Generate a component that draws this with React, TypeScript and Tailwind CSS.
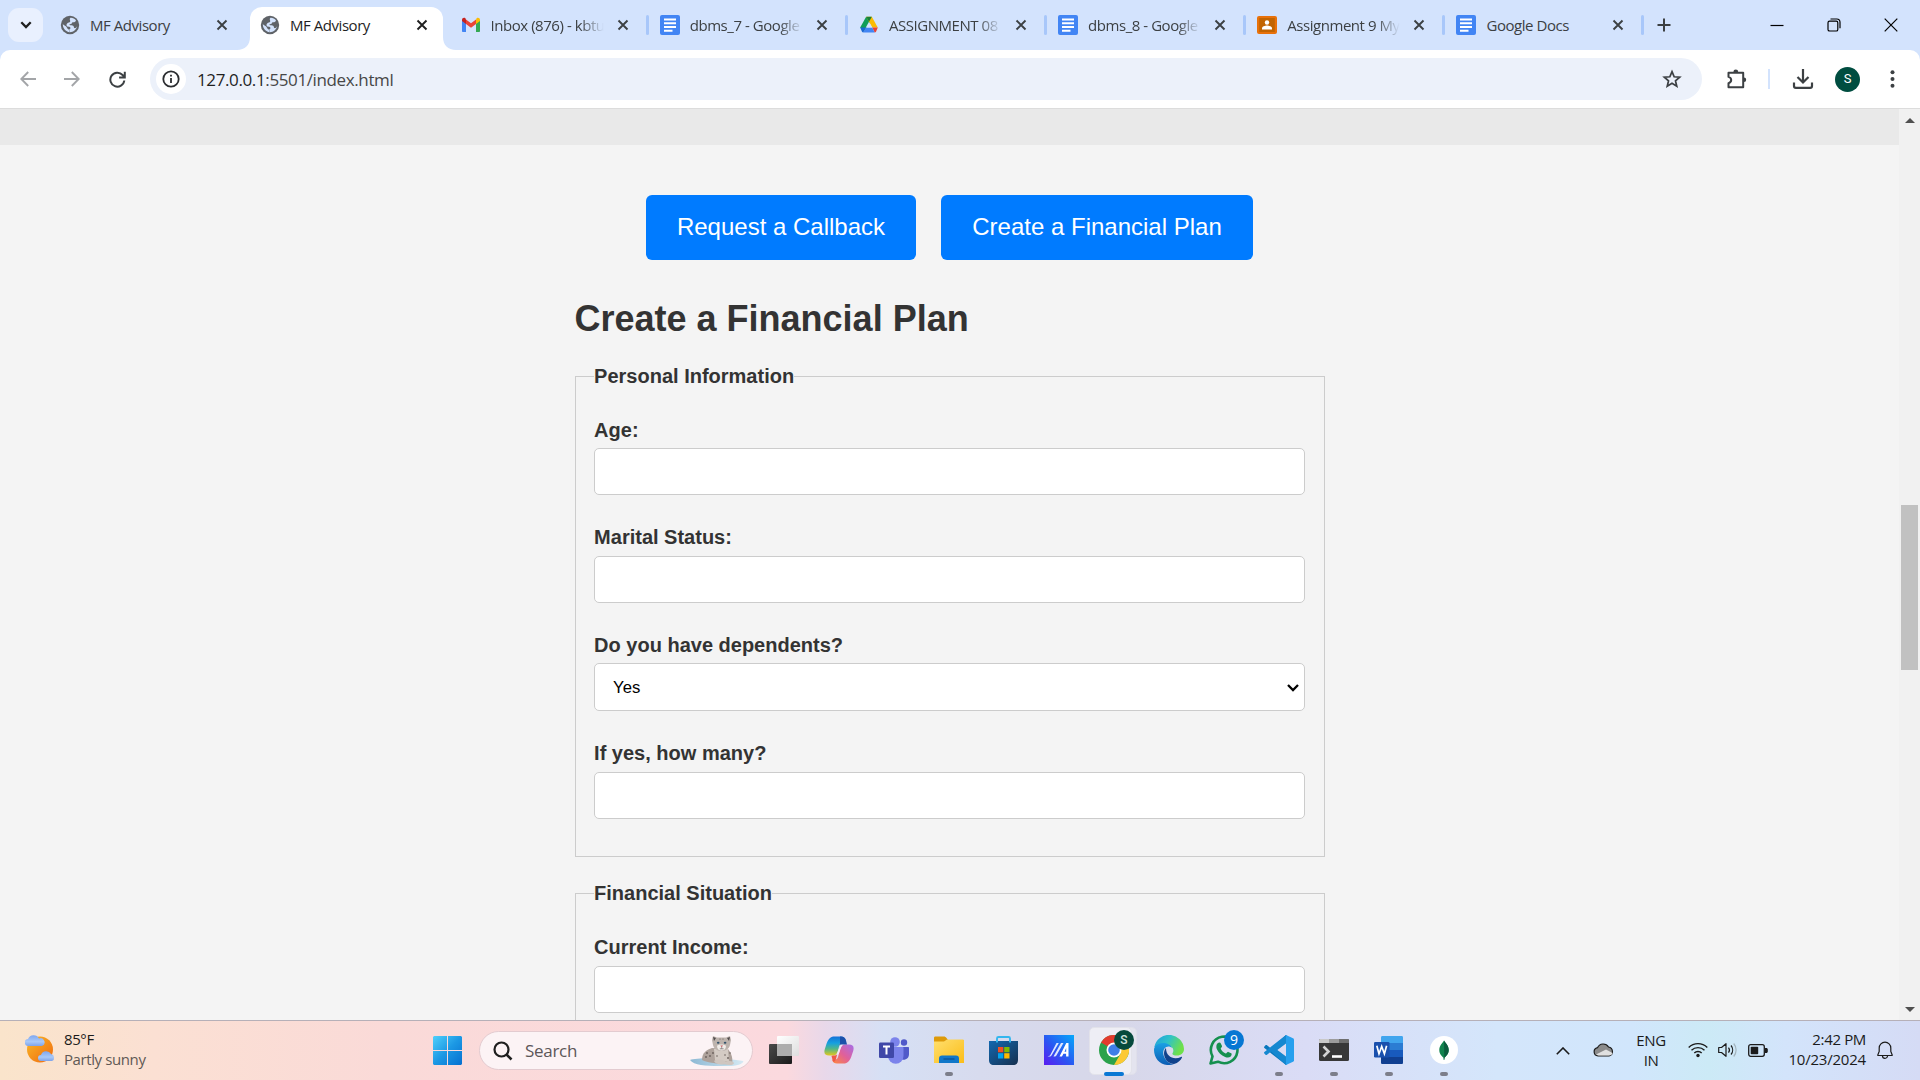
import React from "react";

const UI = "font-['Open_Sans','Noto_Sans',sans-serif]";

function Globe() {
  return (
    <svg width="22" height="22" viewBox="0 0 24 24" className="-m-px">
      <circle cx="12" cy="12" r="10" fill="#5f6368" />
      <path
        d="M12.500 4.200c2.300-.2 4.700 1 6 2.600-.3 1.900-1.800 2.400-3.700 2.200-1 .9-.6 1.800-2 2-1 .2-1.600.3-1.300.9.500.8 3.300-.2 4.300 1.200.7 1 .3 2 1 2.300 1 .3 2.200-.4 3-2-.8 3.500-4 6.500-8 6.500.2-1.600-.2-2.400-1.300-2.900C8.500 16 8.800 14 7.500 13.300c-1.200-.6-2.500-.8-3.300-2.300-.3 4.500 3 8.600 7.600 8.900-.6-.5-.3-1.700-.8-2.700 1-.8 2-1.500 1.200-2.700-1-1-3.700-.2-4-2.200-.2-1.700 1.200-2.600 2.700-3 1.200-.4 1.500-1 1.300-2-.1-.9-1.200-1.300.3-3.100z"
        fill="#d3e3fd"
      />
    </svg>
  );
}

function Gmail() {
  return (
    <svg width="20" height="20" viewBox="0 0 20 20">
      <path d="M1 5v11.2c0 .5.3.8.8.8H5V8z" fill="#4285f4" />
      <path d="M19 5v11.2c0 .5-.3.8-.8.8H15V8z" fill="#34a853" />
      <path d="M15 4.500V9l4-3V4.800C19 3 17 2.200 15.600 3.300z" fill="#fbbc04" />
      <path d="M5 9V4.500L10 8.300l5-3.800V9l-5 3.800z" fill="#ea4335" />
      <path d="M1 4.800V6l4 3V4.500L4.400 3.300C3 2.200 1 3 1 4.800z" fill="#c5221f" />
    </svg>
  );
}

function Docs() {
  return (
    <svg width="20" height="20" viewBox="0 0 20 20">
      <rect width="20" height="20" rx="2" fill="#4285f4" />
      <path d="M4 4.500h12M4 8.300h12M4 12.100h12M4 15.800h8.500" stroke="#fff" strokeWidth="2" />
    </svg>
  );
}

function Drive() {
  return (
    <svg width="20" height="20" viewBox="0 0 20 20">
      <path d="M7 2h3l2.200 4.300L4.800 16.500 1.200 12.500z" fill="#0f9d58" />
      <path d="M7.200 1.800h5.600l6 10.700h-5.600z" fill="#fbbc04" />
      <path d="M7.200 1.800h5.600L10 6.700z" fill="#188038" />
      <path d="M1.200 12.500h5.600L4.300 17.500c-.6 0-1-.3-1.300-.8z" fill="#1967d2" />
      <path d="M13.200 12.500h5.600L17 16.700c-.3.500-.8.8-1.300.8z" fill="#ea4335" />
      <path d="M6.800 12.500h6.400l2.500 5H4.300z" fill="#4285f4" />
      <path d="M10 6.700l3.200 5.800H6.800z" fill="#d3e3fd" />
    </svg>
  );
}

function Classroom() {
  return (
    <svg width="20" height="18" viewBox="0 0 20 18">
      <rect width="20" height="18" rx="2" fill="#e8710a" />
      <rect x="2.200" y="2" width="15.600" height="14" fill="#c26401" />
      <circle cx="10" cy="6.500" r="2.200" fill="#fff" />
      <path d="M5 13.500v-1.200c0-1.900 3-2.800 5-2.800s5 .9 5 2.800v1.200z" fill="#fff" />
    </svg>
  );
}

function Cross({ c = "#3c4043" }: { c?: string }) {
  return (
    <svg width="12" height="12" viewBox="0 0 12 12" stroke={c} strokeWidth="1.900">
      <path d="M1.500 1.500l9 9M10.500 1.500l-9 9" />
    </svg>
  );
}

function Tab({ icon, title, fade, sep }: { icon: React.ReactNode; title: string; fade?: boolean; sep?: boolean }) {
  return (
    <div className="flex h-[50px] w-[199.200px] shrink-0 items-center">
      <div className="flex w-[20px] shrink-0 justify-center">{icon}</div>
      <div
        className={
          "ml-[10px] w-[114px] shrink-0 whitespace-nowrap text-[15px] leading-[20px] tracking-[-0.450px] text-[#3c4043] " +
          (fade ? "[mask-image:linear-gradient(to_right,#000_78%,transparent_99%)]" : "")
        }
      >
        {title}
      </div>
      <div className="ml-[12px]">
        <Cross />
      </div>
      {sep && <div className="ml-[17px] h-[20px] w-[3px] shrink-0 rounded-full bg-[#a8c7fa]" />}
    </div>
  );
}

function TabStrip() {
  return (
    <div className="flex h-[50px] bg-[#d3e3fd]">
      <div className="ml-[8px] mt-[8px] flex h-[34px] w-[35px] shrink-0 items-center justify-center rounded-[11px] bg-[#e9f0fe]">
        <svg width="12" height="8" viewBox="0 0 12 8" fill="none" stroke="#1f1f1f" strokeWidth="2.300">
          <path d="M1.300 1.300L6 6l4.700-4.700" />
        </svg>
      </div>
      <div className="ml-[17px] flex">
        <Tab icon={<Globe />} title="MF Advisory" />
        <div className="relative -ml-[9.200px] mt-[7px] flex h-[43px] w-[193px] shrink-0 items-center rounded-t-[12px] bg-white pb-[7px]">
          <svg className="absolute -left-[13px] bottom-0" width="13" height="13" viewBox="0 0 13 13">
            <path d="M13 0v13H0C8 13 13 8 13 0z" fill="#fff" />
          </svg>
          <svg className="absolute -right-[13px] bottom-0" width="13" height="13" viewBox="0 0 13 13">
            <path d="M0 0v13h13C5 13 0 8 0 0z" fill="#fff" />
          </svg>
          <div className="ml-[10px] flex w-[20px] shrink-0 justify-center">
            <Globe />
          </div>
          <div className="ml-[10px] w-[114px] text-[15px] leading-[20px] tracking-[-0.450px] text-[#1f1f1f]">MF Advisory</div>
          <div className="ml-[12px]">
            <Cross c="#1f1f1f" />
          </div>
        </div>
      </div>
      <div className="ml-[17.500px] flex">
        <Tab icon={<Gmail />} title="Inbox (876) - kbtu" fade sep />
        <Tab icon={<Docs />} title="dbms_7 - Google" fade sep />
        <Tab icon={<Drive />} title="ASSIGNMENT 08" fade sep />
        <Tab icon={<Docs />} title="dbms_8 - Google" fade sep />
        <Tab icon={<Classroom />} title="Assignment 9 My" fade sep />
        <Tab icon={<Docs />} title="Google Docs" sep />
      </div>
      <svg className="ml-[1px] mt-[18px] shrink-0" width="14" height="14" viewBox="0 0 14 14" stroke="#3c4043" strokeWidth="2">
        <path d="M7 .5v13M.5 7h13" />
      </svg>
      <div className="ml-auto mr-[22px] mt-[17px] flex h-[15px] items-center gap-[43px]">
        <svg width="14" height="14" viewBox="0 0 14 14" stroke="#000" strokeWidth="1.200">
          <path d="M.5 7.500h13" />
        </svg>
        <svg width="14" height="14" viewBox="0 0 14 14" fill="none" stroke="#000" strokeWidth="1.200">
          <rect x="1" y="3.200" width="9.800" height="9.800" rx="1.600" />
          <path d="M3.500 1h6.300c1.700 0 3.200 1.400 3.200 3.200v6" />
        </svg>
        <svg width="14" height="14" viewBox="0 0 14 14" stroke="#000" strokeWidth="1.200">
          <path d="M.7.700l12.600 12.600M13.300.7L.7 13.300" />
        </svg>
      </div>
    </div>
  );
}

function Toolbar() {
  return (
    <div className="bg-[#d3e3fd]">
      <div className="flex h-[59px] items-center rounded-t-[10px] border-b border-[#dcdcdc] bg-white">
        <svg className="ml-[20px]" width="16" height="16" viewBox="0 0 16 16" fill="none" stroke="#a3a5a8" strokeWidth="1.900">
          <path d="M16 8H1.500M8.200 1L1.300 8l6.900 7" />
        </svg>
        <svg className="ml-[28px]" width="16" height="16" viewBox="0 0 16 16" fill="none" stroke="#a3a5a8" strokeWidth="1.900">
          <path d="M0 8h14.500M7.800 1l6.900 7-6.900 7" />
        </svg>
        <svg className="ml-[29px]" width="17" height="17" viewBox="0 0 17 17" fill="none" stroke="#3c4043" strokeWidth="2">
          <path d="M15.300 9.500A7 7 0 1 1 13.600 4L15.500 6M15.800.8v5.700h-5.700" />
        </svg>
        <div className="ml-[24px] flex h-[42px] w-[1552px] items-center rounded-full bg-[#ecf1fa]">
          <div className="ml-[6px] flex size-[30px] items-center justify-center rounded-full bg-white">
            <svg width="18" height="18" viewBox="0 0 18 18" fill="none" stroke="#2b2d30" strokeWidth="1.800">
              <circle cx="9" cy="9" r="7.700" />
              <path d="M9 8v5M9 4.800v1.800" />
            </svg>
          </div>
          <div className="ml-[11px] pt-px text-[17px] leading-[24px] tracking-[-0.380px] text-[#1f1f1f]">
            127.0.0.1<span className="text-[#474747]">:5501/index.html</span>
          </div>
          <svg className="ml-auto mr-[20px]" width="20" height="20" viewBox="0 0 24 24" fill="none" stroke="#3c4043" strokeWidth="2.100">
            <path d="M12 3.200l2.600 6.100 6.600.6-5 4.300 1.500 6.500-5.700-3.500-5.700 3.500 1.500-6.500-5-4.300 6.600-.6z" />
          </svg>
        </div>
        <svg className="ml-[24px]" width="22" height="22" viewBox="0 0 22 22" fill="none" stroke="#3c4043" strokeWidth="2">
          <path d="M2.500 4.800h14.700v14.400H2.500v-4c3.600-1 3.600-5.200 0-6.300z" strokeLinejoin="round" />
          <path d="M7.400 4a2.400 2.400 0 0 1 4.800 0zM18 9.600a2.200 2.200 0 0 1 0 4.400z" fill="#3c4043" stroke="none" />
        </svg>
        <div className="ml-[20px] h-[20px] w-[2px] bg-[#d3e3fd]" />
        <svg className="ml-[22px]" width="22" height="22" viewBox="0 0 22 22" fill="none" stroke="#3c4043" strokeWidth="2.200">
          <path d="M11 1v13M5.500 9l5.500 5.500L16.500 9M2 14.500V18c0 1 .8 1.800 1.800 1.800h14.400c1 0 1.800-.8 1.800-1.800v-3.500" />
        </svg>
        <div className="ml-[21px] flex size-[25px] items-center justify-center rounded-full bg-[#004d40] font-[Roboto,sans-serif] text-[13px] text-white">S</div>
        <svg className="ml-[30px]" width="5" height="18" viewBox="0 0 5 18" fill="#3c4043">
          <circle cx="2.500" cy="2.200" r="2" />
          <circle cx="2.500" cy="9" r="2" />
          <circle cx="2.500" cy="15.800" r="2" />
        </svg>
      </div>
    </div>
  );
}

const inputCls = "block w-full rounded-[5px] border border-[#ccc] bg-white outline-none ";

function Field({ label, select }: { label: string; select?: boolean }) {
  return (
    <div className="mb-[31.600px]">
      <label className="block h-[29px] pt-[0.500px] text-[20px] leading-[20px] font-bold">{label}</label>
      {select ? (
        <div className="relative">
          <select className={inputCls + "h-[48px] appearance-none pl-[18px] text-[16.670px] text-black"}>
            <option>Yes</option>
            <option>No</option>
          </select>
          <svg className="absolute right-[6px] top-[21px]" width="12" height="8" viewBox="0 0 12 8" fill="none" stroke="#000" strokeWidth="2.300">
            <path d="M1 1l5 5 5-5" />
          </svg>
        </div>
      ) : (
        <input className={inputCls + "h-[47px]"} />
      )}
    </div>
  );
}

function Section({ title, children, className = "" }: { title: string; children: React.ReactNode; className?: string }) {
  return (
    <fieldset className={"border border-[#ccc] px-[18.600px] " + className}>
      <legend className="h-[23px] text-[20px] leading-[23px] font-bold">{title}</legend>
      {children}
    </fieldset>
  );
}

function Page() {
  return (
    <div className="flex h-[911px] bg-[#f4f4f4]">
      <main className="h-full flex-1 overflow-hidden font-['Liberation_Sans',Arial,sans-serif] text-[#333]">
        <div className="h-[36px] bg-[#e9e9e9]" />
        <div className="mt-[50px] flex justify-center gap-[25px]">
          <button className="h-[65px] w-[270px] rounded-[6px] bg-[#007bff] pb-[2px] text-[24px] text-white">Request a Callback</button>
          <button className="h-[65px] w-[312px] rounded-[6px] bg-[#007bff] pb-[2px] text-[24px] text-white">Create a Financial Plan</button>
        </div>
        <form className="mx-auto w-[750px]">
          <h2 className="mt-[38px] text-[36px] leading-[42px] font-bold">Create a Financial Plan</h2>
          <Section title="Personal Information" className="mt-[25px] h-[492px]">
            <div className="pt-[31px]">
              <Field label="Age:" />
              <Field label="Marital Status:" />
              <Field label="Do you have dependents?" select />
              <Field label="If yes, how many?" />
            </div>
          </Section>
          <Section title="Financial Situation" className="mt-[25px] h-[400px]">
            <div className="pt-[31.600px]">
              <Field label="Current Income:" />
            </div>
          </Section>
        </form>
      </main>
      <div className="flex w-[21px] flex-col items-center bg-[#f1f1f1]">
        <svg className="mt-[9px]" width="10" height="5" viewBox="0 0 10 5" fill="#505050">
          <path d="M5 0l5 5H0z" />
        </svg>
        <div className="mt-[382px] h-[165px] w-[17px] bg-[#c1c1c1]" />
        <svg className="mb-[8px] mt-auto" width="10" height="5" viewBox="0 0 10 5" fill="#505050">
          <path d="M0 0h10L5 5z" />
        </svg>
      </div>
    </div>
  );
}

function Weather() {
  return (
    <svg className="-mt-[3px]" width="30" height="30" viewBox="0 0 30 30">
      <defs>
        <linearGradient id="sun" x1="0" y1="0" x2="1" y2="1">
          <stop offset="0" stopColor="#f9b928" />
          <stop offset="1" stopColor="#f0690e" />
        </linearGradient>
        <linearGradient id="cl" x1="0" y1="0" x2="0" y2="1">
          <stop offset="0" stopColor="#7ea6f0" />
          <stop offset=".6" stopColor="#a9c9f8" />
          <stop offset="1" stopColor="#7fa3ea" />
        </linearGradient>
      </defs>
      <circle cx="15" cy="15.500" r="13" fill="url(#sun)" />
      <path d="M3.500 12A3.500 3.500 0 0 1 3 5a6 6 0 0 1 11-.5 4 4 0 0 1 3 7.500z" fill="url(#cl)" />
      <path d="M16 27a3 3 0 0 1 0-6 5.500 5.500 0 0 1 10-1 3.700 3.700 0 0 1 1 7z" fill="url(#cl)" />
    </svg>
  );
}

function StartIcon() {
  return (
    <svg width="29" height="29" viewBox="0 0 29 29">
      <defs>
        <linearGradient id="st" x1="0" y1="0" x2="1" y2="1">
          <stop offset="0" stopColor="#4fd0fb" />
          <stop offset=".5" stopColor="#1c98e4" />
          <stop offset="1" stopColor="#0670d0" />
        </linearGradient>
      </defs>
      <path d="M1 0h13v14H0V1zM15 0h13l1 1v13H15zM0 15h14v14H1l-1-1zM15 15h14v13l-1 1H15z" fill="url(#st)" />
    </svg>
  );
}

function Leopard() {
  return (
    <svg width="56" height="34" viewBox="0 0 56 34">
      <defs>
        <linearGradient id="ice" x1="0" y1="0" x2="1" y2="0">
          <stop offset="0" stopColor="#8db9d4" />
          <stop offset="1" stopColor="#d5e9f3" />
        </linearGradient>
      </defs>
      <path d="M1 26c7-3 40-2 53 1 2 1-4 5-12 5-18 0-36 1-41-6z" fill="url(#ice)" />
      <path d="M13 26c0-8 5-10 10-12l16 1c4 5 5 10 4 15-8 1-24-1-30-4z" fill="#aea29b" />
      <path d="M25 15h14l1 13-14-2z" fill="#d4cbc4" />
      <path d="M24 2l4 1.500h9L41 2l1 4-1 5c-1 4-5 6-8.500 6S25 15 24 11l-1-5z" fill="#bdb3ad" />
      <path d="M28 12c1-2 8-2 9 0 0 3-2 4.500-4.500 4.500S28 15 28 12z" fill="#f0ece8" />
      <path d="M24 3l3 1-2 3zM41 3l-3 1 2 3z" fill="#504a4c" />
      <ellipse cx="29.200" cy="8.700" rx="1.300" ry="1" fill="#33526b" />
      <ellipse cx="36.100" cy="8.700" rx="1.300" ry="1" fill="#33526b" />
      <path d="M31.300 11.500h2.800l-1.400 1.800z" fill="#c35d62" />
      <path d="M32.700 13.200v1.300M30.800 14.800h3.800" stroke="#504a4c" strokeWidth=".6" />
      <g fill="#6b605c">
        <circle cx="18" cy="19" r=".9" />
        <circle cx="21" cy="22" r=".9" />
        <circle cx="24" cy="19" r=".9" />
        <circle cx="17" cy="23" r=".9" />
        <circle cx="28" cy="22" r=".8" />
        <circle cx="36" cy="21" r=".8" />
        <circle cx="39" cy="24" r=".9" />
        <circle cx="31" cy="5" r=".6" />
        <circle cx="34" cy="5" r=".6" />
        <circle cx="41" cy="19" r=".8" />
      </g>
      <path d="M25 27c4-3 10-1 12 1 3-2 7-1 8 1 0 2-5 3-9 1-5 1-10 0-11-3z" fill="#cfc6c0" />
    </svg>
  );
}

function TaskView() {
  return (
    <svg width="30" height="28" viewBox="0 0 30 28">
      <defs>
        <linearGradient id="tvd" x1="0" y1="0" x2="1" y2="1">
          <stop offset="0" stopColor="#4a4a4a" />
          <stop offset="1" stopColor="#1b1b1b" />
        </linearGradient>
        <linearGradient id="tvl" x1="0" y1="0" x2="1" y2="1">
          <stop offset="0" stopColor="#fff" />
          <stop offset="1" stopColor="#dedede" />
        </linearGradient>
      </defs>
      <rect x="0" y="8" width="23" height="20" rx="1" fill="url(#tvd)" />
      <rect x="8" y="0" width="22" height="20" rx="1" fill="url(#tvl)" />
      <rect x="8" y="8" width="15" height="12" fill="#adadad" />
    </svg>
  );
}

function Copilot() {
  return (
    <svg width="30" height="28" viewBox="0 0 30 28">
      <defs>
        <linearGradient id="ca" x1="0" y1="0" x2="0" y2="1">
          <stop offset="0" stopColor="#1472d8" />
          <stop offset=".35" stopColor="#16a0e0" />
          <stop offset=".65" stopColor="#52b788" />
          <stop offset="1" stopColor="#e5c71c" />
        </linearGradient>
        <linearGradient id="cb" x1="1" y1="0" x2="0" y2="1">
          <stop offset="0" stopColor="#a66ee8" />
          <stop offset=".5" stopColor="#e0609a" />
          <stop offset="1" stopColor="#ff8a3c" />
        </linearGradient>
      </defs>
      <path d="M9 .5C5 1 3 6 1.500 11-.8 17 .5 19.500 5 19.500h4c3 0 4-2 5-5l2-7.500c.8-2.500 2-3 6-2.500C21 1.500 19.500.5 17 .5z" fill="url(#ca)" />
      <path d="M21 27.500c4-.5 6-5.500 7.500-10.500 2.300-6 1-8.500-3.500-8.500h-4c-3 0-4 2-5 5l-2 7.500c-.8 2.500-2 3-6 2.500 1 3 2.500 4 5 4z" fill="url(#cb)" />
      <path d="M17.500 8.500c1-.5 2-.5 2.500-.5-2 1-3 3-4 6.500s-2 5-5.500 5.500c2.500-1 3-3 4-6.500z" fill="#f4e6f8" />
      <path d="M16 .5c3.500-.3 5 .7 6 4l1 4h-5c-1.500 0-2.300.5-2.800 1.200L16 7z" fill="#1b50aa" />
      <path d="M9 19.500c2.500 0 3.500-.5 4.200-1.500L12 23c-.8 2-1.500 3-3 2.500L7.500 20z" fill="#f05a48" />
    </svg>
  );
}

function Teams() {
  return (
    <svg width="30" height="27" viewBox="0 0 30 27">
      <circle cx="16" cy="5" r="4.800" fill="#7b83eb" />
      <circle cx="25" cy="5.500" r="3.200" fill="#5059c9" />
      <path d="M20 10h9c.6 0 1 .4 1 1v6.500a5.500 5.500 0 0 1-9 4z" fill="#5059c9" />
      <path d="M9 10h14.500c.6 0 1 .4 1 1v8a7.700 7.700 0 0 1-15.500 0z" fill="#7b83eb" />
      <rect x="0" y="5.500" width="15" height="15.500" rx="1.300" fill="#4048a8" />
      <path d="M4 9.500h7M7.500 9.500V17.500" stroke="#fff" strokeWidth="2" />
    </svg>
  );
}

function Folder() {
  return (
    <svg width="30" height="28" viewBox="0 0 30 28">
      <defs>
        <linearGradient id="fo" x1="0" y1="0" x2="1" y2="1">
          <stop offset="0" stopColor="#ffdf6e" />
          <stop offset="1" stopColor="#fbbd18" />
        </linearGradient>
      </defs>
      <path d="M0 2c0-1 .5-1.500 1.500-1.500H10c1 0 1.500.5 2.500 1.500l1.500 2h14.500c1 0 1.500.5 1.500 1.500V8H0z" fill="#dd9a0a" />
      <path d="M0 5.500h10L13 3.500h15.500c1 0 1.500.5 1.500 1.500v22H0z" fill="url(#fo)" />
      <path d="M5 27v-4.500c0-2 1-3 3-3h14c2 0 3 1 3 3V27z" fill="#1177c9" />
      <path d="M9.500 23h11" stroke="#0b4e92" strokeWidth="1.200" />
    </svg>
  );
}

function Store() {
  return (
    <svg width="29" height="30" viewBox="0 0 29 30">
      <defs>
        <linearGradient id="so" x1="0" y1="0" x2="1" y2="1">
          <stop offset="0" stopColor="#1268b0" />
          <stop offset="1" stopColor="#16304f" />
        </linearGradient>
      </defs>
      <path d="M0 6h29v19c0 3-1.500 5-5 5H5c-3.500 0-5-2-5-5z" fill="url(#so)" />
      <path d="M8 7.500V3.500C8 2.500 8.500 2 9.500 2h10c1 0 1.500.5 1.500 1.500v4" fill="none" stroke="#33b6ee" strokeWidth="1.900" />
      <path d="M9 12h5.300v5.300H9z" fill="#f25022" />
      <path d="M15.200 12h5.300v5.300h-5.300z" fill="#7fba00" />
      <path d="M9 18.200h5.300v5.300H9z" fill="#00a4ef" />
      <path d="M15.200 18.200h5.300v5.300h-5.300z" fill="#ffb900" />
    </svg>
  );
}

function Asus() {
  return (
    <svg width="30" height="30" viewBox="0 0 30 30">
      <defs>
        <linearGradient id="as" x1="1" y1="0" x2="0" y2="1">
          <stop offset="0" stopColor="#05a8fa" />
          <stop offset=".55" stopColor="#2b55f2" />
          <stop offset="1" stopColor="#5a1cf0" />
        </linearGradient>
      </defs>
      <rect width="30" height="30" fill="url(#as)" />
      <path d="M3.500 21.500L6 20.500 12.500 8h2.300L7.800 20c-.7 1.100-1.300 1.500-2.500 1.500z" fill="#dfe7ff" />
      <path d="M9.500 21.500L17 8h2.500l-6.800 12c-.7 1.100-1.300 1.500-2.500 1.500z" fill="#dfe7ff" />
      <path d="M15.500 21.500L22.300 8h2.200v13.500h-2.400v-2.700h-2.700L18 21.500zM20.500 16.700h1.700v-3.600z" fill="#fff" fillRule="evenodd" />
    </svg>
  );
}

function Chrome() {
  return (
    <svg width="30" height="30" viewBox="0 0 30 30">
      <circle cx="15" cy="15" r="15" fill="#2ba24c" />
      <path d="M15 15L2 7.500A15 15 0 0 1 28 7.500H15z" fill="#e33b2e" />
      <path d="M28 7.500A15 15 0 0 1 15 30l6.500-11.200L21 7.500z" fill="#fcc934" />
      <circle cx="15" cy="15" r="7.500" fill="#fff" />
      <circle cx="15" cy="15" r="5.800" fill="#3f7ee8" />
    </svg>
  );
}

function Edge() {
  return (
    <svg width="30" height="30" viewBox="0 0 30 30">
      <defs>
        <linearGradient id="ea" x1="0" y1="0" x2="1" y2=".4">
          <stop offset="0" stopColor="#1e9de0" />
          <stop offset=".5" stopColor="#2fc2c8" />
          <stop offset="1" stopColor="#6fe04a" />
        </linearGradient>
        <linearGradient id="eb" x1="0" y1="0" x2="0" y2="1">
          <stop offset="0" stopColor="#1ba0e4" />
          <stop offset="1" stopColor="#0c5cb4" />
        </linearGradient>
      </defs>
      <path d="M.3 12A15 15 0 0 1 30 14c0 4-3 6.500-7 6.500-3.500 0-5-1.200-4.500-2.200 2-3 .5-7.300-4.500-7.300-6 0-10 2-13.700 1z" fill="url(#ea)" />
      <path d="M0 15c0-4 4-7 9-7 4 0 8 2 9 5-5-4-10 1-8.500 7C11 26 17 29.500 20 29 9 33 0 25 0 15z" fill="url(#eb)" />
      <path d="M12 13c-4 4-2 15 8 16 4-1 7-4 8-6.500.3-.8-.3-1-1-.6-7 3.500-15 0-15-8.900z" fill="#10428c" />
    </svg>
  );
}

function WhatsApp() {
  return (
    <svg width="30" height="30" viewBox="0 0 30 30">
      <path d="M1.500 28.500l2-7.200A13.300 13.300 0 1 1 9 26.700z" fill="none" stroke="#15904f" strokeWidth="2.600" strokeLinejoin="round" />
      <path d="M10.500 7.500c.6 0 1 .2 1.300.9l1.200 2.700c.3.800-1.400 2.100-1.300 2.700.8 2 3.200 4.200 5 4.800.8.200 1.900-2 2.600-1.700l2.900 1.400c1 .5.200 2.500-.5 3.200-1.500 1.300-3.500 1.300-5.600.4-4-1.600-6.800-4.500-8.300-8-.9-2.400-.4-6.400 2.700-6.400z" fill="#15904f" />
    </svg>
  );
}

function VSCode() {
  return (
    <svg width="30" height="30" viewBox="0 0 30 30">
      <path d="M22 0L7 13.500 3 10.300c-.5-.4-1-.4-1.500 0L.4 11.400c-.5.500-.5 1.200 0 1.600L22 30l2-2V2z" fill="#0877bd" />
      <path d="M22 30L7 16.500l-4 3.200c-.5.400-1 .4-1.500 0L.4 18.600c-.5-.5-.5-1.200 0-1.600L22 0v8.500L13 15l9 6.500z" fill="#1588d0" />
      <path d="M22 0l7 3.200c.6.300 1 .8 1 1.500v20.600c0 .7-.4 1.200-1 1.500L22 30z" fill="#27a0ee" />
      <path d="M22 8.500V21.500L13.300 15z" fill="#d9dcf3" />
    </svg>
  );
}

function Terminal() {
  return (
    <svg width="30" height="22" viewBox="0 0 30 22">
      <rect width="30" height="22" rx="1.500" fill="#383838" />
      <path d="M0 4V1.500C0 .5.500 0 1.500 0H10v4z" fill="#c9c9c9" />
      <path d="M10 0h10v4H10z" fill="#9c9c9c" />
      <path d="M20 0h8.500c1 0 1.500.5 1.500 1.500V4H20z" fill="#6e6e6e" />
      <path d="M4.500 7.500l5 5-5 5" fill="none" stroke="#d4d4d4" strokeWidth="2.600" />
      <path d="M13 17.500h10" stroke="#fff" strokeWidth="2.600" />
    </svg>
  );
}

function Word() {
  return (
    <svg width="30" height="28" viewBox="0 0 30 28">
      <path d="M7 7V1.500C7 .5 7.500 0 8.500 0h19c1 0 1.500.5 1.500 1.500V7z" fill="#41a5ee" />
      <path d="M7 7h22v7H7z" fill="#2b7cd3" />
      <path d="M7 14h22v7H7z" fill="#185abd" />
      <path d="M7 21h22v5.500c0 1-.5 1.500-1.500 1.500h-19c-1 0-1.500-.5-1.500-1.500z" fill="#103f91" />
      <rect y="6" width="15.500" height="15.500" rx="1.300" fill="#1a50ad" />
      <path d="M2.800 9.800l2.200 8 2.700-7.300 2.700 7.300 2.200-8" fill="none" stroke="#fff" strokeWidth="1.700" />
    </svg>
  );
}

function Mongo() {
  return (
    <svg width="28" height="28" viewBox="0 0 28 28">
      <circle cx="14" cy="14" r="14" fill="#fff" />
      <path d="M14 4.500c1.500 2.500 4.700 5 4.700 9.500 0 4-2.600 6-4 7.500L14.300 24h-.6l-.4-2.500c-1.500-1.500-4-3.500-4-7.500 0-4.500 3.200-7 4.700-9.500z" fill="#11834e" />
      <path d="M14 4.500c1.500 2.500 4.700 5 4.700 9.500 0 4-2.600 6-4 7.500L14.300 24z" fill="#0b5c3d" />
    </svg>
  );
}

function AppCell({ children, running }: { children: React.ReactNode; running?: boolean }) {
  return (
    <div className="relative flex h-[58px] w-[55px] shrink-0 items-center justify-center pb-px">
      {children}
      {running && <div className="absolute bottom-[4px] h-[4px] w-[8px] rounded-full bg-[#7c7e8a]" />}
    </div>
  );
}

function Taskbar() {
  return (
    <div
      className={
        UI +
        " flex h-[60px] items-center border-t border-[#b6b0b8] text-[15px] text-[#1b1b1b] bg-[linear-gradient(90deg,#fae4cb_0%,#fbe0d3_8%,#fadad8_20%,#fbd9de_41%,#e8d8ea_43%,#d6e0f5_46%,#d7dbee_51%,#d7d7e9_58%,#dadcf6_68%,#d4e6fb_78%,#d1e6fc_85%,#cceaf6_89%,#d3e4fb_93%,#d5dbf5_100%)]"
      }
    >
      <div className="flex w-[420px] shrink-0 items-center pl-[25px]">
        <Weather />
        <div className="-mt-[4px] ml-[9px] leading-[20px] tracking-[-0.400px]">
          <div>85°F</div>
          <div className="text-[#5f5955]">Partly sunny</div>
        </div>
      </div>
      <AppCell>
        <StartIcon />
      </AppCell>
      <div className="ml-[4px] mr-[3px] flex h-[39px] w-[274px] shrink-0 items-center rounded-full border border-[#e3cbd0] bg-[#fcf3f5]">
        <svg className="ml-[13px]" width="20" height="20" viewBox="0 0 20 20" fill="none" stroke="#1f1f1f" strokeWidth="2.200">
          <circle cx="8.500" cy="8.500" r="7" />
          <path d="M13.500 13.500l5 5" strokeWidth="2.600" />
        </svg>
        <div className="ml-[12px] text-[17px] tracking-[-0.300px] text-[#5c5759]">Search</div>
        <div className="ml-auto mr-[7px]">
          <Leopard />
        </div>
      </div>
      <AppCell><TaskView /></AppCell>
      <AppCell><Copilot /></AppCell>
      <AppCell><Teams /></AppCell>
      <AppCell running><Folder /></AppCell>
      <AppCell><Store /></AppCell>
      <AppCell><Asus /></AppCell>
      <AppCell>
        <div className="absolute left-[8px] top-[5px] h-[48px] w-[43px] rounded-[5px] border border-[#dfdfea] bg-[#e4e4ef]" />
        <div className="absolute left-[3px] top-[5px] h-[48px] w-[43px] rounded-[5px] border border-[#e2e2ea] bg-[#eeeef5]" />
        <div className="relative"><Chrome /></div>
        <div className="absolute left-[28px] top-[8px] flex size-[20px] items-center justify-center rounded-full bg-[#06493c] font-[Roboto,sans-serif] text-[12px] font-medium text-[#cfe0dc]">S</div>
        <div className="absolute bottom-[4px] h-[4px] w-[20px] rounded-full bg-[#0a78d4]" />
      </AppCell>
      <AppCell><Edge /></AppCell>
      <AppCell>
        <WhatsApp />
        <div className="absolute left-[28px] top-[8px] flex size-[20px] items-center justify-center rounded-full bg-[#0677d3] text-[14px] leading-none text-white">9</div>
      </AppCell>
      <AppCell running><VSCode /></AppCell>
      <AppCell running><Terminal /></AppCell>
      <AppCell running><Word /></AppCell>
      <AppCell running><Mongo /></AppCell>
      <div className="ml-auto mr-[27px] flex items-center">
        <svg width="14" height="8" viewBox="0 0 14 8" fill="none" stroke="#1b1b1b" strokeWidth="1.600">
          <path d="M.8 7.200L7 1l6.200 6.200" />
        </svg>
        <svg className="-mt-[3px] ml-[23px]" width="21" height="15" viewBox="0 0 21 15">
          <path d="M5 14A4.200 4.200 0 0 1 4.500 5.700 6.200 6.200 0 0 1 15.500 5 4.600 4.600 0 0 1 16 14z" fill="#8b8b8b" stroke="#1b1b1b" strokeWidth="1.200" />
          <path d="M3 12.500L13 7.500l6.500 3.500c0 1.500-1.500 2.500-3.500 2.500H5.500z" fill="#e0e0e0" />
        </svg>
        <div className="-mt-[2px] ml-[22px] w-[30px] text-center leading-[20px] tracking-[-0.400px]">
          <div>ENG</div>
          <div>IN</div>
        </div>
        <svg className="-mt-[2px] ml-[22px]" width="20" height="16" viewBox="0 0 20 16" fill="none" stroke="#1b1b1b" strokeWidth="1.400">
          <path d="M.7 5.500a13.200 13.200 0 0 1 18.600 0M3.500 8.300a9.200 9.200 0 0 1 13 0M6.300 11.100a5.200 5.200 0 0 1 7.400 0" />
          <circle cx="10" cy="13.500" r="1.700" fill="#1b1b1b" stroke="none" />
        </svg>
        <svg className="-mt-[2px] ml-[10px]" width="20" height="16" viewBox="0 0 20 16" fill="none" stroke="#1b1b1b" strokeWidth="1.200">
          <path d="M.7 5.500h2.800L8 1.700v12.600l-4.500-3.800H.7z" strokeLinejoin="round" />
          <path d="M10.500 5.500a4 4 0 0 1 0 5M13 3.500a7 7 0 0 1 0 9" />
          <path d="M15.700 1.500a10 10 0 0 1 0 13" stroke="#a5b5be" />
        </svg>
        <svg className="-mt-[1px] ml-[10px]" width="20" height="13" viewBox="0 0 20 13" fill="none">
          <rect x=".7" y=".7" width="15.600" height="11.600" rx="2" stroke="#1b1b1b" strokeWidth="1.300" />
          <rect x="2.700" y="2.700" width="7.500" height="7.600" rx=".8" fill="#1b1b1b" />
          <path d="M17 4h1.200c1 0 1.600.6 1.600 1.500v2c0 .9-.6 1.500-1.600 1.500H17z" fill="#1b1b1b" />
        </svg>
        <div className="-mt-[4px] ml-[18px] w-[80px] text-right leading-[20px] whitespace-nowrap">
          <div className="tracking-[-0.350px]">2:42 PM</div>
          <div className="tracking-[-0.200px]">10/23/2024</div>
        </div>
        <svg className="-mt-[1px] ml-[11px]" width="16" height="18" viewBox="0 0 16 18" fill="none" stroke="#1b1b1b" strokeWidth="1.200">
          <path d="M2.200 10.500V7a5.800 5.800 0 0 1 11.600 0v3.500L15.200 14c.1.300 0 .5-.4.500H1.200c-.4 0-.5-.2-.4-.500zM5.500 15a2.500 2.300 0 0 0 5 0" />
        </svg>
      </div>
    </div>
  );
}

export default function App() {
  return (
    <div className={UI + " flex h-[1080px] w-[1920px] flex-col overflow-hidden"}>
      <TabStrip />
      <Toolbar />
      <Page />
      <Taskbar />
    </div>
  );
}
